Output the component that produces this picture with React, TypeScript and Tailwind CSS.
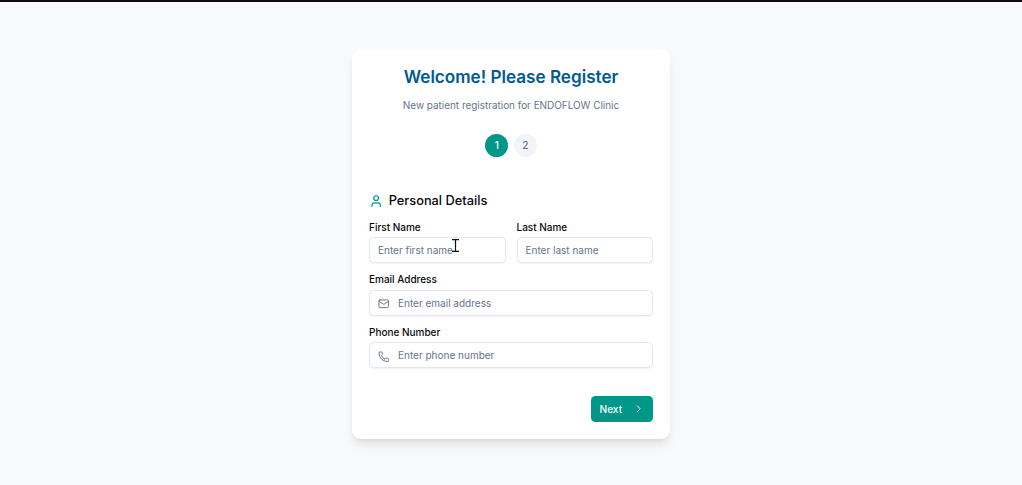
import React from "react";
import { ChevronRight, Mail, Phone, User } from "lucide-react";

type FieldProps = {
  label: string;
  placeholder: string;
  icon?: React.ReactNode;
};

function Field({ label, placeholder, icon }: FieldProps) {
  return (
    <label className="flex flex-col">
      <span className="text-[10px] leading-[14px] tracking-[-0.01px] font-medium text-[#09090b]">{label}</span>
      <span
        className={`mt-[3.4px] flex h-[26px] items-center rounded-[4.5px] border border-[#e2e8f0] bg-white shadow-[0_1px_1.5px_rgba(0,0,0,0.05)] ${
          icon ? "gap-[9px] px-[7.5px]" : "px-[8px]"
        }`}
      >
        {icon}
        <input
          className="w-full min-w-0 bg-transparent text-[10px] leading-[14px] text-[#0f172a] outline-none placeholder:text-[#64748b]"
          placeholder={placeholder}
        />
      </span>
    </label>
  );
}

function TextCursor() {
  return (
    <svg className="absolute top-[237px] left-[451px]" width="9" height="13" viewBox="0 0 9 13" fill="none">
      <path d="M1 .6H8M4.5 .6V12.4M1 12.4H8" stroke="#111" strokeWidth="1.2" />
    </svg>
  );
}

export default function App() {
  return (
    <div className="relative flex h-[485px] w-full flex-col items-center border-t-2 border-[#0d0b10] bg-[#f8f9fb] font-['Inter',sans-serif]">
      <main className="mt-[47px] flex h-[390px] w-[318px] flex-col rounded-[9px] bg-white px-[17px] shadow-[0_7px_11px_-2px_rgba(0,0,0,0.1),0_3px_4px_-3px_rgba(0,0,0,0.1)]">
        <header className="flex flex-col items-center pt-[16px]">
          <h1 className="text-[17.1px] leading-[23px] font-semibold whitespace-nowrap text-[#005a92]">
            Welcome! Please Register
          </h1>
          <p className="mt-[10px] text-[9.94px] leading-[14px] whitespace-nowrap text-[#64748b]">
            New patient registration for ENDOFLOW Clinic
          </p>
          <div className="mt-[22px] flex gap-[5.5px] text-[10px] font-medium">
            <span className="flex size-[23px] items-center justify-center rounded-full bg-[#009688] text-white">1</span>
            <span className="flex size-[23px] items-center justify-center rounded-full bg-[#f1f5f9] text-[#64748b]">2</span>
          </div>
        </header>
        <form className="mt-[35px] flex flex-col">
          <h2 className="flex items-center gap-[5.5px] text-[12.8px] leading-[18px] font-medium text-[#09090b]">
            <User size={14.2} className="text-[#009688]" />
            Personal Details
          </h2>
          <div className="mt-[10px] grid grid-cols-2 gap-[11px]">
            <Field label="First Name" placeholder="Enter first name" />
            <Field label="Last Name" placeholder="Enter last name" />
          </div>
          <div className="mt-[8.9px]">
            <Field
              label="Email Address"
              placeholder="Enter email address"
              icon={<Mail size={11.5} className="mt-[3px] shrink-0 text-[#64748b]" />}
            />
          </div>
          <div className="mt-[9.1px]">
            <Field
              label="Phone Number"
              placeholder="Enter phone number"
              icon={<Phone size={11.5} className="mt-[3px] shrink-0 text-[#64748b]" />}
            />
          </div>
          <button
            type="button"
            className="mt-[27.8px] flex h-[26px] w-[62px] items-center justify-between self-end rounded-[4.5px] bg-[#009688] pr-[9px] pl-[8.5px] text-[10.1px] font-medium text-white"
          >
            <span className="pt-px">Next</span>
            <ChevronRight size={11.5} />
          </button>
        </form>
      </main>
      <TextCursor />
    </div>
  );
}
